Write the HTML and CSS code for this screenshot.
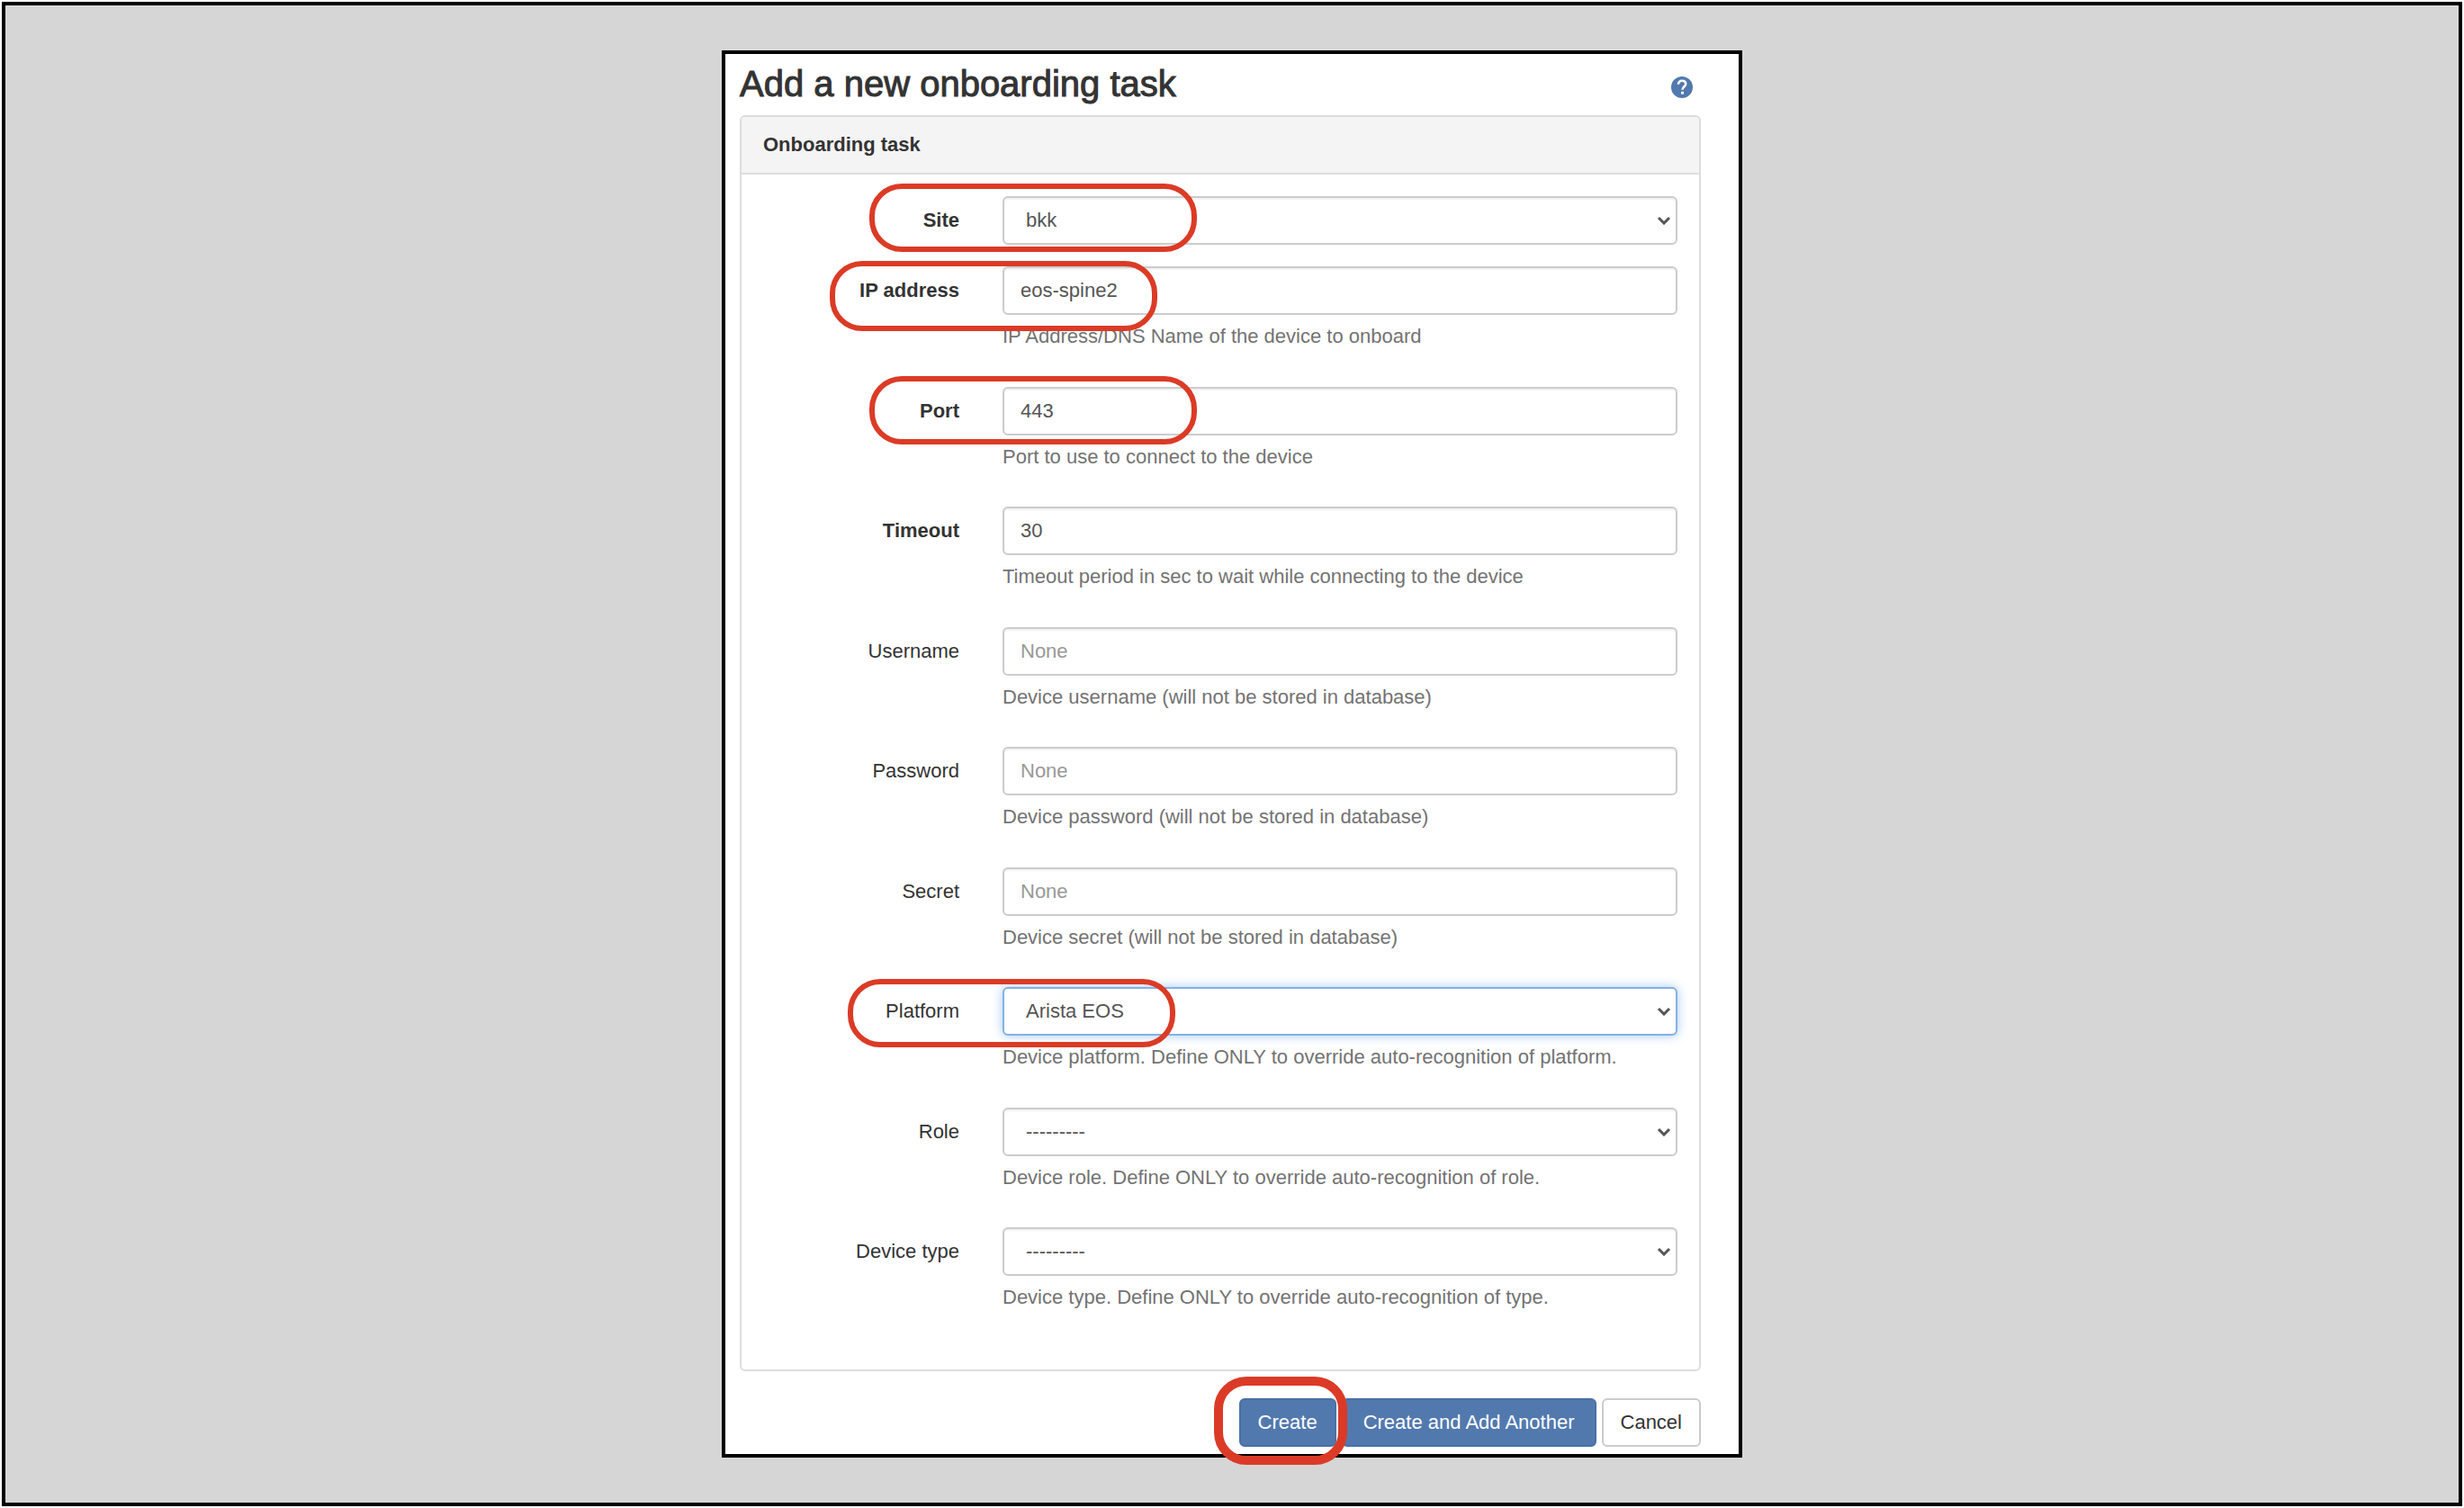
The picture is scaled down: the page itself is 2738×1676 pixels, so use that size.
FILE: index.html
```html
<!DOCTYPE html>
<html lang="en">
<head>
<meta charset="utf-8">
<meta name="viewport" content="width=device-width, initial-scale=1">
<title>Add a new onboarding task</title>
<link rel="stylesheet" href="styles.css">
</head>
<body>
<main class="frame">
  <form class="card">
    <header class="title-bar">
      <h1 class="title">Add a new onboarding task</h1>
      <a class="help-link" href="#" aria-label="Help">
        <svg class="help-icon" viewBox="0 0 24 24" aria-hidden="true">
          <circle cx="12" cy="12" r="12" fill="#5279ae"/>
          <path d="M8 8.800C8 6.200 9.600 4.800 12 4.800s4.200 1.400 4.200 3.500c0 2.900-3.700 3.100-3.700 6.500" fill="none" stroke="#fff" stroke-width="2.600"/>
          <rect x="11" y="16.800" width="3" height="2.800" fill="#fff"/>
        </svg>
      </a>
    </header>

    <section class="panel">
      <h2 class="panel-heading">Onboarding task</h2>
      <div class="panel-body">
        <div class="field field-compact">
          <label class="label required" for="site">Site</label>
          <div class="control">
            <select class="input select" id="site"><option>bkk</option></select>
            <svg class="chevron" viewBox="0 0 16 10" aria-hidden="true"><path d="M2 2l6 6 6-6"/></svg>
          </div>
          <span class="ring ring-site"></span>
        </div>
        <div class="field">
          <label class="label required" for="ip">IP address</label>
          <div class="control">
            <input class="input" id="ip" type="text" value="eos-spine2">
            <p class="hint">IP Address/DNS Name of the device to onboard</p>
          </div>
          <span class="ring ring-ip"></span>
        </div>
        <div class="field">
          <label class="label required" for="port">Port</label>
          <div class="control">
            <input class="input" id="port" type="text" value="443">
            <p class="hint">Port to use to connect to the device</p>
          </div>
          <span class="ring ring-port"></span>
        </div>
        <div class="field">
          <label class="label required" for="timeout">Timeout</label>
          <div class="control">
            <input class="input" id="timeout" type="text" value="30">
            <p class="hint">Timeout period in sec to wait while connecting to the device</p>
          </div>
        </div>
        <div class="field">
          <label class="label" for="username">Username</label>
          <div class="control">
            <input class="input" id="username" type="text" placeholder="None">
            <p class="hint">Device username (will not be stored in database)</p>
          </div>
        </div>
        <div class="field">
          <label class="label" for="password">Password</label>
          <div class="control">
            <input class="input" id="password" type="password" placeholder="None">
            <p class="hint">Device password (will not be stored in database)</p>
          </div>
        </div>
        <div class="field">
          <label class="label" for="secret">Secret</label>
          <div class="control">
            <input class="input" id="secret" type="password" placeholder="None">
            <p class="hint">Device secret (will not be stored in database)</p>
          </div>
        </div>
        <div class="field">
          <label class="label" for="platform">Platform</label>
          <div class="control">
            <select class="input select active" id="platform"><option>Arista EOS</option></select>
            <svg class="chevron" viewBox="0 0 16 10" aria-hidden="true"><path d="M2 2l6 6 6-6"/></svg>
            <p class="hint">Device platform. Define ONLY to override auto-recognition of platform.</p>
          </div>
          <span class="ring ring-platform"></span>
        </div>
        <div class="field">
          <label class="label" for="role">Role</label>
          <div class="control">
            <select class="input select" id="role"><option>---------</option></select>
            <svg class="chevron" viewBox="0 0 16 10" aria-hidden="true"><path d="M2 2l6 6 6-6"/></svg>
            <p class="hint">Device role. Define ONLY to override auto-recognition of role.</p>
          </div>
        </div>
        <div class="field">
          <label class="label" for="device-type">Device type</label>
          <div class="control">
            <select class="input select" id="device-type"><option>---------</option></select>
            <svg class="chevron" viewBox="0 0 16 10" aria-hidden="true"><path d="M2 2l6 6 6-6"/></svg>
            <p class="hint">Device type. Define ONLY to override auto-recognition of type.</p>
          </div>
        </div>
      </div>
    </section>

    <footer class="actions">
      <div class="marked">
        <button class="button primary" type="submit">Create</button>
        <span class="ring ring-create"></span>
      </div>
      <button class="button primary wide" type="submit">Create and Add Another</button>
      <button class="button" type="button">Cancel</button>
    </footer>
  </form>
</main>
</body>
</html>
```
FILE: styles.css
```css
*, *::before, *::after { box-sizing: border-box; }

body {
  margin: 0;
  padding: 2px;
  background: #fff;
  color: #333;
  font-family: "Liberation Sans", Arial, sans-serif;
  font-size: 22px;
  line-height: 30px;
}

.frame {
  min-height: calc(100vh - 4px);
  padding: 50px 16px;
  border: 4px solid #000;
  background: #d6d6d6;
}

.card {
  max-width: 1134px;
  margin: 0 auto;
  padding: 12px 42px 8px 16px;
  border: 4px solid #000;
  background: #fff;
}

.title-bar {
  display: flex;
  justify-content: space-between;
  align-items: flex-end;
  margin-bottom: 14px;
}

.title {
  margin: 0;
  font-size: 40px;
  font-weight: 400;
  line-height: 42px;
  -webkit-text-stroke: 1px #333;
}

.help-link {
  display: flex;
  align-items: center;
  height: 34px;
  margin-right: 9px;
}

.help-icon { width: 24px; height: 24px; }

.panel {
  border: 2px solid #ddd;
  border-radius: 6px;
}

.panel-heading {
  margin: 0;
  padding: 16px 24px;
  border-bottom: 2px solid #ddd;
  border-radius: 4px 4px 0 0;
  background: #f4f4f4;
  font-size: 22px;
  line-height: 30px;
}

.panel-body { padding: 24px 0; }

.field {
  position: relative;
  display: grid;
  grid-template-columns: 1fr 3fr;
  margin-bottom: 41px;
}

.field:nth-child(odd) { margin-bottom: 40px; }
.field.field-compact { margin-bottom: 24px; }

.label {
  padding-right: 24px;
  line-height: 54px;
  text-align: right;
}

.required { font-weight: 700; }

.control {
  position: relative;
  padding: 0 24px;
}

.input {
  display: block;
  width: 100%;
  height: 54px;
  padding: 0 18px;
  border: 2px solid #ccc;
  border-radius: 6px;
  background: #fff;
  box-shadow: inset 0 2px 2px rgba(0, 0, 0, .06);
  color: #555;
  font: inherit;
}

.input::placeholder { color: #999; opacity: 1; }

.select { padding: 0 24px; appearance: none; }

.active {
  border-color: #84b1e4;
  box-shadow: 0 0 12px rgba(102, 165, 233, .6);
}

.chevron {
  position: absolute;
  top: 22px;
  right: 31px;
  width: 16px;
  height: 10px;
  fill: none;
  stroke: #555;
  stroke-width: 3;
  pointer-events: none;
}

.hint {
  margin: 8px 0 0;
  line-height: 31px;
  color: #737373;
}

.actions {
  display: flex;
  justify-content: flex-end;
  gap: 6px;
  margin-top: 30px;
}

.marked { position: relative; }

.button {
  height: 54px;
  padding: 0 19px;
  border: 2px solid #ccc;
  border-radius: 6px;
  background: #fff;
  color: #333;
  font: inherit;
}

.primary {
  border-color: #4a70a6;
  background: #5279ae;
  color: #fff;
}

.wide { padding: 0 22px; }

/* Markers laid over the fields to fill in */
.ring {
  position: absolute;
  width: 364px;
  height: 76px;
  border: 6px solid #db3b26;
  border-radius: 36px;
  pointer-events: none;
}

.ring-site { top: -14px; left: 142px; }
.ring-ip { top: -6px; left: 98px; height: 78px; }
.ring-port { top: -12px; left: 142px; }
.ring-platform { top: -9px; left: 118px; }

.ring-create {
  top: -24px;
  left: -28px;
  width: 148px;
  height: 98px;
  border-width: 10px;
}
```
